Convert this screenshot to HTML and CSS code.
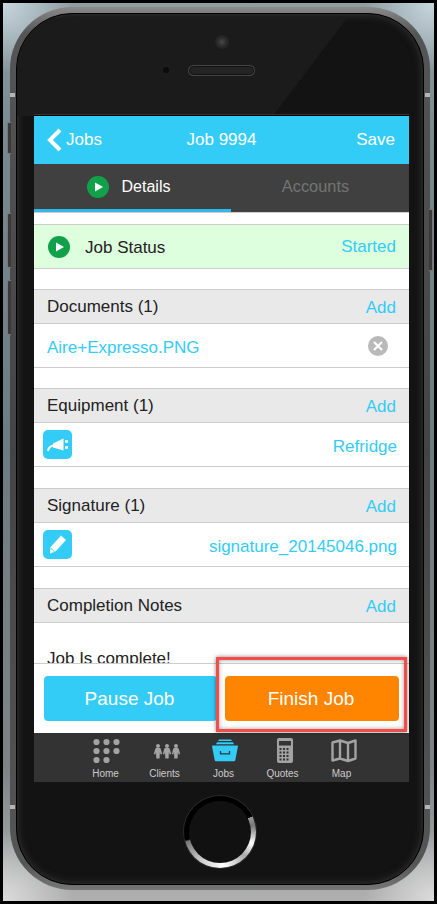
FILE: index.html
```html
<!DOCTYPE html>
<html lang="en">
<head>
  <meta charset="UTF-8">
  <title>Job 9994</title>
  <meta name="viewport" content="width=device-width, initial-scale=1.0">
  <link rel="stylesheet" href="styles.css">
</head>
<body>
  <div class="frame">
    <div class="phone">
      <span class="side-btn side-mute"></span>
      <span class="side-btn side-up"></span>
      <span class="side-btn side-down"></span>
      <span class="side-btn side-power"></span>
      <span class="tick tick-left"></span>
      <span class="tick tick-right"></span>
      <span class="tick tick-left tick-low"></span>
      <span class="tick tick-right tick-low"></span>
      <div class="face">
        <div class="sheen"></div>
        <div class="earpiece">
          <span class="camera"></span>
          <span class="sensor"></span>
          <span class="speaker"></span>
        </div>

        <div class="screen">
          <!-- top bar -->
          <header class="topbar">
            <a class="back">
              <svg width="15" height="24" viewBox="0 0 15 24"><path d="M13 2 3 12l10 10" fill="none" stroke="#fff" stroke-width="4"/></svg>
              Jobs
            </a>
            <span class="topbar-title">Job 9994</span>
            <a class="save">Save</a>
          </header>

          <!-- tabs -->
          <nav class="tabs">
            <a class="tab tab-active">
              <svg class="play" viewBox="0 0 22 22"><circle cx="11" cy="11" r="11" fill="#12a14b"/><path d="M8 6.500v9l8-4.500z" fill="#fff"/></svg>
              Details
            </a>
            <a class="tab tab-off">Accounts</a>
          </nav>

          <div class="content">
            <div class="row status-row">
              <svg class="play" viewBox="0 0 22 22"><circle cx="11" cy="11" r="11" fill="#12a14b"/><path d="M8 6.500v9l8-4.500z" fill="#fff"/></svg>
              <span class="status-label">Job Status</span>
              <a class="link">Started</a>
            </div>

            <section class="group">
              <div class="group-head"><span>Documents (1)</span><a class="link add">Add</a></div>
              <div class="row">
                <a class="link row-link">Aire+Expresso.PNG</a>
                <svg class="remove" viewBox="0 0 20 20"><circle cx="10" cy="10" r="10" fill="#b9b9b9"/><path d="m6 6 8 8M14 6l-8 8" stroke="#fff" stroke-width="2.200"/></svg>
              </div>
            </section>

            <section class="group">
              <div class="group-head"><span>Equipment (1)</span><a class="link add">Add</a></div>
              <div class="row row-icon">
                <span class="tile">
                  <svg viewBox="0 0 29 29"><path d="M10 13.500 20.500 8.500v12L10 17.500z" fill="#fff"/><path d="M5 21c.5-3 2-5 5.500-5.500" fill="none" stroke="#fff" stroke-width="2"/><path d="M22 11.500h3M22 17.500h3" stroke="#fff" stroke-width="2.400"/></svg>
                </span>
                <a class="link row-link">Refridge</a>
              </div>
            </section>

            <section class="group group-wide">
              <div class="group-head"><span>Signature (1)</span><a class="link add">Add</a></div>
              <div class="row row-icon">
                <span class="tile">
                  <svg viewBox="0 0 29 29"><path d="M18 5.500 23 10 12.500 21.500 7 23.500l.3-6z" fill="#fff"/><path d="M7.500 18.500c1.800.2 3.300 1.500 3.800 3.500" fill="none" stroke="#33ccf7" stroke-width="1"/></svg>
                </span>
                <a class="link row-link">signature_20145046.png</a>
              </div>
            </section>

            <section class="group group-wide">
              <div class="group-head"><span>Completion Notes</span><a class="link add">Add</a></div>
              <p class="notes">Job Is complete!</p>
            </section>
          </div>

          <!-- action buttons -->
          <div class="actions">
            <button class="btn btn-pause">Pause Job</button>
            <button class="btn btn-finish">Finish Job</button>
          </div>

          <!-- bottom menu -->
          <nav class="bottom-nav">
            <a class="nav-item">
              <svg viewBox="0 0 30 28" width="30" height="28"><g fill="#a3a3a3"><circle cx="4.500" cy="4" r="3.100"/><circle cx="14.500" cy="4" r="3.100"/><circle cx="24.500" cy="4" r="3.100"/><circle cx="4.500" cy="13" r="3.100"/><circle cx="14.500" cy="13" r="3.100"/><circle cx="24.500" cy="13" r="3.100"/><circle cx="4.500" cy="22" r="3.100"/><circle cx="14.500" cy="22" r="3.100"/></g></svg>
              Home
            </a>
            <a class="nav-item">
              <svg viewBox="0 0 30 28" width="30" height="28"><g fill="#a3a3a3"><circle cx="7" cy="8" r="2"/><path d="M2.800 16l1.400-5c.2-.7.600-1 1.200-1h3.200c.6 0 1 .3 1.200 1l1.400 5-1.500.4-.8-2.400-.3 6.400H5.300L5 14l-.7 2.400z"/><circle cx="16" cy="8" r="2"/><path d="M11.800 16l1.400-5c.2-.7.600-1 1.200-1h3.200c.6 0 1 .3 1.200 1l1.400 5-1.500.4-.8-2.400-.3 6.400h-3.300L14 14l-.7 2.400z"/><circle cx="25" cy="8" r="2"/><path d="M20.800 16l1.400-5c.2-.7.600-1 1.200-1h3.200c.6 0 1 .3 1.200 1l1.400 5-1.500.4-.8-2.400-.3 6.400h-3.300L23 14l-.7 2.400z"/></g></svg>
              Clients
            </a>
            <a class="nav-item nav-active">
              <svg viewBox="0 0 30 28" width="30" height="28"><path d="M9 1.500h12l1 1.500H8zM7 4.200h16l1 2H6z" fill="#33ccf7"/><path d="M3 7.500h24c.6 0 1 .4.900 1L25.400 21.800c-.2 1-.8 1.500-1.700 1.500H6.300c-.9 0-1.500-.5-1.700-1.500L2.100 8.500c-.1-.6.300-1 .9-1z" fill="#33ccf7"/><path d="M10.500 13v2.800h9V13" fill="none" stroke="#2b3a40" stroke-width="1.300"/></svg>
              Jobs
            </a>
            <a class="nav-item">
              <svg viewBox="0 0 30 28" width="30" height="28"><rect x="8" y="0" width="16" height="25" rx="2" fill="#a3a3a3"/><rect x="10" y="3" width="12" height="4.500" fill="#333"/><g fill="#333"><rect x="10.500" y="10" width="2" height="2"/><rect x="14" y="10" width="2" height="2"/><rect x="17.500" y="10" width="2" height="2"/><rect x="10.500" y="13.500" width="2" height="2"/><rect x="14" y="13.500" width="2" height="2"/><rect x="17.500" y="13.500" width="2" height="2"/><rect x="10.500" y="17" width="2" height="2"/><rect x="14" y="17" width="2" height="2"/><rect x="17.500" y="17" width="2" height="2"/><rect x="10.500" y="20.500" width="2" height="2"/><rect x="14" y="20.500" width="2" height="2"/><rect x="17.500" y="20.500" width="2" height="2"/></g></svg>
              Quotes
            </a>
            <a class="nav-item">
              <svg viewBox="0 0 30 28" width="30" height="28"><path d="M4.500 4.500 12 2.500l8 2.500 7.500-2.500v18L20 23l-8-2.500-7.500 2zM12 2.500v18M20 5v18" fill="none" stroke="#a3a3a3" stroke-width="2.400" stroke-linejoin="round"/></svg>
              Map
            </a>
          </nav>

          <div class="highlight"></div>
        </div>

        <div class="home-btn"><span class="home-inner"></span></div>
      </div>
    </div>
  </div>
</body>
</html>
```

FILE: styles.css
```css
/* reset */
html, body {
  margin: 0;
  padding: 0;
  background-color: #000;
  box-sizing: border-box;
  font-family: "Liberation Sans", Arial, sans-serif;
}
*, *::before, *::after {
  box-sizing: inherit;
}
a {
  text-decoration: none;
}

/* screenshot frame */
.frame {
  width: 431px;
  height: 898px;
  margin: 3px;
  padding: 4px 4px 11px 7px;
  background:
    radial-gradient(circle at 0 0, #c8d6de, rgba(200, 214, 222, 0) 70px),
    radial-gradient(circle at 100% 0, #c8d6de, rgba(200, 214, 222, 0) 70px),
    radial-gradient(circle at 0 100%, #dcdcdc, rgba(220, 220, 220, 0) 70px),
    radial-gradient(circle at 100% 100%, #dcdcdc, rgba(220, 220, 220, 0) 70px),
    linear-gradient(180deg, #8f9da3 0%, #7a898f 15%, #6d7c82 50%, #7d8486 85%, #b0b0b0 100%);
  overflow: hidden;
}

/* phone body */
.phone {
  position: relative;
  height: 100%;
  padding: 6px 6px 5px 6px;
  border-radius: 62px;
  background: linear-gradient(180deg, #8a8a8a, #555 3%, #444 50%, #555 97%, #777);
}
.side-btn {
  position: absolute;
  left: -3px;
  width: 4px;
  background: #3a3a3a;
  border: 1px solid #777;
  border-right: 0;
  border-radius: 2px 0 0 2px;
}
.side-mute { top: 115px; height: 32px; }
.side-up { top: 206px; height: 55px; }
.side-down { top: 273px; height: 55px; }
.side-power { left: auto; right: -3px; top: 202px; height: 62px; border-right: 1px solid #777; border-left: 0; border-radius: 0 2px 2px 0; }
.tick {
  position: absolute;
  top: 86px;
  width: 5px;
  height: 4px;
  background: #b5b5b5;
}
.tick-left { left: 0; }
.tick-right { right: 0; }
.tick-low { top: 798px; }

.face {
  position: relative;
  height: 100%;
  padding-top: 102px;
  border-radius: 56px;
  background: #131313;
  border: 1px solid #000;
  box-shadow: inset 0 0 8px #3a3a3a;
  overflow: hidden;
}
.sheen {
  position: absolute;
  top: 4px;
  left: 0;
  width: 330px;
  height: 98px;
  background: #1b1b1b;
  clip-path: polygon(0 0, 100% 0, 256px 100%, 0 100%);
}

/* camera + speaker */
.earpiece {
  position: absolute;
  top: 0;
  left: 0;
  right: 0;
}
.camera {
  position: absolute;
  top: 21px;
  left: 198px;
  width: 14px;
  height: 14px;
  border-radius: 50%;
  background: radial-gradient(circle, #484848 0, #2b2b2b 45%, #1a1a1a 100%);
}
.sensor {
  position: absolute;
  top: 53px;
  left: 146px;
  width: 6px;
  height: 6px;
  border-radius: 50%;
  background: #0b0b0b;
}
.speaker {
  position: absolute;
  top: 52px;
  left: 172px;
  width: 65px;
  height: 9px;
  border-radius: 5px;
  background: #242424;
  border: 1px solid #111;
  box-shadow: 0 0 0 1px #444;
}

/* app screen */
.screen {
  position: relative;
  width: 375px;
  height: 666px;
  margin-left: 17px;
  display: flex;
  flex-direction: column;
  background: #fff;
  font-size: 17px;
  color: #222;
  box-shadow: 0 -1px 0 #000, 0 -2px 0 #333;
}
.link {
  color: #33ccf7;
}

.topbar {
  flex: none;
  height: 48px;
  padding: 0 14px;
  display: grid;
  grid-template-columns: 1fr auto 1fr;
  align-items: center;
  background: #33ccf7;
  color: #fff;
}
.back {
  display: flex;
  align-items: center;
  gap: 4px;
  margin-left: -1px;
}
.save {
  text-align: right;
}

.tabs {
  flex: none;
  height: 48px;
  display: grid;
  grid-template-columns: 197px 1fr;
  background: #404040;
  font-size: 16px;
}
.tab {
  display: flex;
  align-items: center;
  justify-content: center;
}
.tab-active {
  gap: 13px;
  padding: 1px 8px 0 0;
  color: #fff;
  border-bottom: 3px solid #31b8ea;
}
.tab-off {
  padding: 0 9px 3px 0;
  color: #747474;
  font-size: 16.400px;
}
.play {
  flex: none;
  width: 22px;
  height: 22px;
}

/* content list */
.content {
  flex: 1;
  min-height: 0;
  overflow: hidden;
  border-top: 1px solid #ccc;
  padding-top: 11px;
}
.row {
  display: flex;
  align-items: center;
  justify-content: space-between;
  height: 44px;
  padding: 0 13px;
  border-bottom: 1px solid #ccc;
}
.row-link {
  margin-top: 4px;
}
.status-row {
  justify-content: flex-start;
  height: 45px;
  padding-left: 14px;
  border-top: 1px solid #ccc;
  background: #dfd;
}
.status-label {
  margin: 2px 0 0 15px;
}
.status-row .link {
  margin-left: auto;
}
.group {
  margin-top: 20px;
}
.group-wide {
  margin-top: 21px;
}
.group-head {
  display: flex;
  align-items: center;
  justify-content: space-between;
  height: 35px;
  padding: 0 13px;
  background: #e9e9e9;
  border-top: 1px solid #ccc;
  border-bottom: 1px solid #ccc;
}
.add {
  margin-top: 2px;
}
.remove {
  width: 20px;
  height: 20px;
  margin-right: 8px;
}
.row-icon {
  padding: 0 12px 0 9px;
}
.tile {
  align-self: flex-start;
  width: 29px;
  height: 29px;
  margin-top: 7px;
  border-radius: 5px;
  background: #33ccf7;
}
.tile svg {
  display: block;
}
.notes {
  margin: 26px 13px 0;
}

/* bottom buttons */
.actions {
  flex: none;
  height: 70px;
  display: grid;
  grid-template-columns: 173px 174px;
  gap: 8px;
  padding: 12px 10px;
  background: #fff;
  border-top: 1px solid #ccc;
}
.btn {
  border: 0;
  padding: 0 2px 0 0;
  border-radius: 4px;
  color: #fff;
  font-family: inherit;
  font-size: 19px;
}
.btn-pause { background: #33ccf7; }
.btn-finish { background: #ff8400; }

.bottom-nav {
  flex: none;
  height: 49px;
  padding: 5px 0 0 42px;
  display: flex;
  background: #333;
}
.nav-item {
  width: 59px;
  display: flex;
  flex-direction: column;
  align-items: center;
  gap: 2px;
  font-size: 10px;
  color: #ccc;
}
.nav-item svg {
  margin-left: 2px;
}

/* red annotation box round the finish button */
.highlight {
  position: absolute;
  left: 182px;
  top: 541px;
  width: 191px;
  height: 75px;
  border: 3px solid #f44b4b;
  box-shadow: 0 0 4px rgba(0, 0, 0, 0.5), inset 0 0 4px rgba(0, 0, 0, 0.4);
}

/* home button */
.home-btn {
  width: 72px;
  height: 72px;
  margin: 14px auto 0;
  padding: 5px;
  border-radius: 50%;
  background: conic-gradient(from 64deg, #999 0deg, #777 15deg, #fff 45deg, #aaa 70deg, #fff 110deg, #ccc 150deg, #777 190deg, #000 193deg, #000 360deg);
  box-shadow: 0 0 0 1px #2a2a2a;
}
.home-inner {
  display: block;
  width: 100%;
  height: 100%;
  border-radius: 50%;
  background: #111;
}
```
